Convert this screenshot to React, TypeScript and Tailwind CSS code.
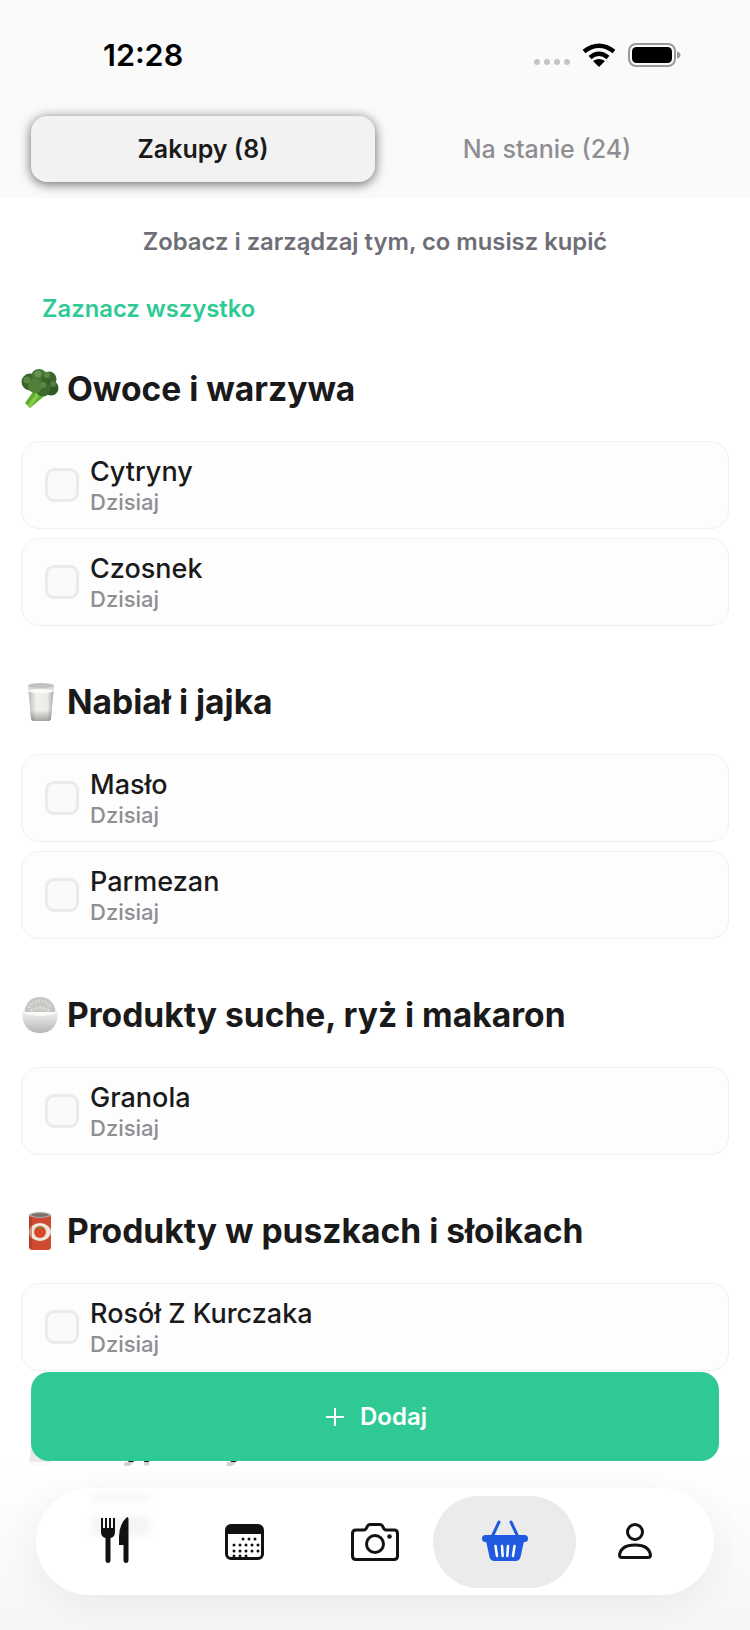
const FONT = "font-['Inter','Noto_Sans',sans-serif]";

function Broccoli() {
  return (
    <svg width="38" height="40" viewBox="0 0 38 40" className="shrink-0">
      <path d="M9 39 L4 34 L14 20 L27 24 Z" fill="#5fae2e" />
      <path d="M9 39 L6.500 36.500 L17 22 L20 24 Z" fill="#84cc44" />
      <circle cx="9" cy="13" r="8.500" fill="#37642a" />
      <circle cx="18" cy="8" r="8" fill="#47753a" />
      <circle cx="28" cy="10" r="7.500" fill="#3a662c" />
      <circle cx="30" cy="19" r="7.500" fill="#305a27" />
      <circle cx="22" cy="20" r="7.500" fill="#3c6b2f" />
      <circle cx="14" cy="17" r="7" fill="#527f39" />
      <circle cx="6" cy="11" r="3.500" fill="#5a8a42" />
      <circle cx="17" cy="5" r="3.500" fill="#68924c" />
      <circle cx="26" cy="6" r="3" fill="#5a8a42" />
      <circle cx="32" cy="15" r="3" fill="#52803c" />
      <circle cx="22" cy="16" r="3" fill="#5a8a42" />
    </svg>
  );
}

function Milk() {
  return (
    <svg width="38" height="40" viewBox="0 0 38 40" className="shrink-0">
      <defs>
        <linearGradient id="milkBody" x1="0" x2="1" y1="0" y2="0">
          <stop offset="0" stopColor="#b9b9b7" />
          <stop offset="0.3" stopColor="#f0f0ee" />
          <stop offset="0.75" stopColor="#ecece9" />
          <stop offset="1" stopColor="#a9a9a6" />
        </linearGradient>
        <linearGradient id="milkBase" x1="0" x2="0" y1="0" y2="1">
          <stop offset="0" stopColor="#000" stopOpacity="0" />
          <stop offset="1" stopColor="#000" stopOpacity="0.32" />
        </linearGradient>
      </defs>
      <path d="M7 3 H33 L30 36 Q30 39 27 39 H13 Q10 39 10 36 Z" fill="#d9d9d7" />
      <path d="M7.500 9 H32.500 L30 36 Q30 39 27 39 H13 Q10 39 10 36 Z" fill="url(#milkBody)" />
      <path d="M9 28 H31 L30 36 Q30 39 27 39 H13 Q10 39 10 36 Z" fill="url(#milkBase)" />
      <ellipse cx="20" cy="3.500" rx="13" ry="2.500" fill="#c2c2c0" />
      <ellipse cx="20" cy="9" rx="12.500" ry="2" fill="#fbfbfa" />
    </svg>
  );
}

function RiceBowl() {
  return (
    <svg width="38" height="38" viewBox="0 0 38 38" className="shrink-0">
      <defs>
        <linearGradient id="bowlBody" x1="0" x2="0" y1="0" y2="1">
          <stop offset="0" stopColor="#f4f4f2" />
          <stop offset="1" stopColor="#b5b5b3" />
        </linearGradient>
      </defs>
      <path d="M3 16 Q6 1 19 1 Q32 1 35 16 Z" fill="#c6c6c3" />
      <path d="M8 12 Q12 5 19 5 Q27 5 30 12" fill="none" stroke="#dcdcd9" strokeWidth="3" strokeDasharray="1.500 1.500" />
      <path d="M10 15 Q19 8 28 15" fill="none" stroke="#e2e2df" strokeWidth="3" strokeDasharray="1.500 1.500" />
      <path d="M1 15 Q19 21 37 15 Q37 37 19 37 Q1 37 1 15 Z" fill="url(#bowlBody)" />
      <path d="M1 15 Q19 21 37 15 L37 17 Q19 23 1 17 Z" fill="#fafafa" />
    </svg>
  );
}

function Can() {
  return (
    <svg width="38" height="40" viewBox="0 0 38 40" className="shrink-0">
      <rect x="8" y="3" width="22" height="36" rx="3" fill="#cf4a33" />
      <ellipse cx="19" cy="21" rx="11" ry="9" fill="#efe6d8" />
      <ellipse cx="19" cy="4" rx="11" ry="3" fill="#a8a8a6" />
      <ellipse cx="19" cy="4" rx="8.500" ry="1.800" fill="#7f6f6b" />
      <circle cx="19" cy="21" r="6" fill="#d9472d" />
      <path d="M16 16.500 Q19 18 22 16.500" fill="none" stroke="#6d8a34" strokeWidth="1.500" />
      <rect x="8" y="6" width="3" height="31" fill="#9f2f20" opacity="0.45" />
    </svg>
  );
}

function Salt() {
  return (
    <svg width="38" height="40" viewBox="0 0 38 40" className="shrink-0">
      <path d="M12 3 H26 L30 37 Q30 39 27 39 H11 Q8 39 8 37 Z" fill="#e9e9e7" />
      <path d="M12 3 H26 L27 10 H11 Z" fill="#b9b9b7" />
    </svg>
  );
}

function Item({ name }: { name: string }) {
  return (
    <div className="flex h-[88px] items-center gap-[11px] rounded-[18px] border border-[#f0f0f0] bg-[#fdfdfd] pl-[23px]">
      <div className="h-[34px] w-[34px] rounded-[9px] border-[3px] border-[#ebebeb] bg-[#fafafa]" />
      <div className="flex flex-col">
        <span className="text-[27px] leading-[33px] font-[550] text-[#1a1a1a]">{name}</span>
        <span className="text-[22px] leading-[28px] font-medium text-[#8e8e93]">Dzisiaj</span>
      </div>
    </div>
  );
}

function Section({ icon, title, items }: { icon: React.ReactNode; title: string; items: string[] }) {
  return (
    <section className="mb-[54px]">
      <div className="mb-[30px] flex h-[44px] items-center gap-[8px]">
        {icon}
        <h2 className="text-[33.6px] leading-[44px] font-bold whitespace-nowrap text-[#1a1a1a]">{title}</h2>
      </div>
      <div className="flex flex-col gap-[9px]">
        {items.map((name) => (
          <Item key={name} name={name} />
        ))}
      </div>
    </section>
  );
}

function ForkKnife() {
  return (
    <svg width="28" height="46" viewBox="0 0 28 46">
      <path d="M0 1 H2 V11 H4 V1 H6 V11 H8 V1 H10 V11 H12 V1 H14 V15 Q14 20 9.500 21 V43 Q9.500 46 7 46 Q4.500 46 4.500 43 V21 Q0 20 0 15 Z" fill="#111" />
      <path d="M26 0 Q27.500 0 27.500 2 V43 Q27.500 46 25 46 Q22.500 46 22.500 43 V28 H18 V20 Q18 7 26 0 Z" fill="#111" />
    </svg>
  );
}

function CalendarIcon() {
  const dots = [
    [18, 15], [24, 15], [30, 15],
    [9, 21], [15, 21], [21, 21], [27, 21], [33, 21],
    [9, 27], [15, 27], [21, 27], [27, 27], [33, 27],
    [9, 32], [15, 32], [21, 32],
  ];
  return (
    <svg width="39" height="36" viewBox="0 0 39 36">
      <rect x="1.500" y="1.500" width="36" height="33" rx="4.500" fill="#fff" stroke="#111" strokeWidth="3" />
      <path d="M1.500 10 V6 Q1.500 1.500 6 1.500 H33 Q37.500 1.500 37.500 6 V10 Z" fill="#111" />
      {dots.map(([x, y]) => (
        <circle key={`${x}-${y}`} cx={x} cy={y} r="1.500" fill="#111" />
      ))}
    </svg>
  );
}

function CameraIcon() {
  return (
    <svg width="48" height="38" viewBox="0 0 48 38" fill="none">
      <path
        d="M5 7 H13 Q14.500 7 15.500 5 L16.500 3 Q17.500 1.500 19 1.500 H29 Q30.500 1.500 31.500 3 L32.500 5 Q33.500 7 35 7 H43 Q46.500 7 46.500 10.500 V33 Q46.500 36.500 43 36.500 H5 Q1.500 36.500 1.500 33 V10.500 Q1.500 7 5 7 Z"
        stroke="#111"
        strokeWidth="3"
      />
      <circle cx="24" cy="21" r="8.500" stroke="#111" strokeWidth="3" />
      <circle cx="38.500" cy="13.500" r="2.300" fill="#111" />
    </svg>
  );
}

function BasketIcon() {
  return (
    <svg width="46" height="42" viewBox="0 0 46 42" fill="none">
      <path d="M10 17 L17 2 M36 17 L29 2" stroke="#1f5ae0" strokeWidth="3" strokeLinecap="round" />
      <rect x="0" y="15" width="46" height="7" rx="3.500" fill="#1f5ae0" />
      <path d="M4 21 H42 L38.500 37 Q37.500 41 33.500 41 H12.500 Q8.500 41 7.500 37 Z" fill="#1f5ae0" />
      <path d="M13.500 26 L15 36 M20 26 L20.700 36 M26 26 L25.300 36 M32.500 26 L31 36" stroke="#fff" strokeWidth="2.500" strokeLinecap="round" />
    </svg>
  );
}

function PersonIcon() {
  return (
    <svg width="34" height="36" viewBox="0 0 34 36" fill="none">
      <ellipse cx="17" cy="9" rx="7.500" ry="7.500" stroke="#111" strokeWidth="3" />
      <path d="M4 34.500 H30 Q32.500 34.500 32.500 32 Q31 22 17 22 Q3 22 1.500 32 Q1.500 34.500 4 34.500 Z" stroke="#111" strokeWidth="3" />
    </svg>
  );
}

function StatusBar() {
  return (
    <div className="flex h-[115px] items-start justify-between pt-[36px] pr-[69px] pl-[103px]">
      <span className="text-[30.5px] leading-[38px] font-semibold text-black">12:28</span>
      <div className="flex items-center pt-[7px]">
        <div className="mt-[14px] mr-[12px] flex gap-[4px]">
          <span className="h-[6px] w-[6px] rounded-full bg-[#c4c4c4]" />
          <span className="h-[6px] w-[6px] rounded-full bg-[#c4c4c4]" />
          <span className="h-[6px] w-[6px] rounded-full bg-[#c4c4c4]" />
          <span className="h-[6px] w-[6px] rounded-full bg-[#c4c4c4]" />
        </div>
        <svg width="34" height="24" viewBox="0 0 34 24" fill="none" className="mr-[12px]">
          <path d="M2 8.500 Q17 -3 32 8.500" stroke="#000" strokeWidth="4.500" />
          <path d="M8 14.500 Q17 7 26 14.500" stroke="#000" strokeWidth="4.500" />
          <path d="M17 24 L11 18 Q17 14 23 18 Z" fill="#000" />
        </svg>
        <svg width="53" height="24" viewBox="0 0 53 24" fill="none">
          <rect x="1" y="1" width="46" height="22" rx="7" stroke="#9a9a9a" strokeWidth="2" />
          <rect x="4" y="4" width="40" height="16" rx="4.500" fill="#000" />
          <path d="M49 8.500 Q52.500 9.500 52.500 12 Q52.500 14.500 49 15.500 Z" fill="#9a9a9a" />
        </svg>
      </div>
    </div>
  );
}

export default function App() {
  return (
    <div className={`relative h-[1630px] w-[750px] overflow-hidden bg-white ${FONT}`}>
      <header className="h-[198px] bg-[#fafafa]">
        <StatusBar />
        <div className="flex px-[31px] pt-[1px]">
          <div className="flex h-[66px] w-[344px] items-center justify-center rounded-[16px] bg-[#f2f2f2] pt-[2px] text-[25px] font-semibold text-[#1a1a1a] shadow-[0_2px_12px_rgba(0,0,0,0.6)]">
            Zakupy (8)
          </div>
          <div className="flex h-[66px] flex-1 items-center justify-center pt-[2px] text-[25px] font-medium text-[#8e8e93]">
            Na stanie (24)
          </div>
        </div>
      </header>

      <main className="px-[21px]">
        <p className="mt-[29px] text-center text-[23.8px] leading-[30px] font-semibold text-[#6e6e76]">
          Zobacz i zarządzaj tym, co musisz kupić
        </p>
        <button className="mt-[37px] mb-[43px] ml-[21px] block text-[23.8px] leading-[30px] font-semibold text-[#2fca93]">
          Zaznacz wszystko
        </button>
        <Section icon={<Broccoli />} title="Owoce i warzywa" items={["Cytryny", "Czosnek"]} />
        <Section icon={<Milk />} title="Nabiał i jajka" items={["Masło", "Parmezan"]} />
        <Section icon={<RiceBowl />} title="Produkty suche, ryż i makaron" items={["Granola"]} />
        <Section icon={<Can />} title="Produkty w puszkach i słoikach" items={["Rosół Z Kurczaka"]} />
        <Section icon={<Salt />} title="Przyprawy" items={["Sól"]} />
      </main>

      {/* fade behind the floating nav */}
      <div className="absolute inset-x-0 top-[1462px] bottom-0 bg-gradient-to-b from-[#ffffffcc] to-[#f6f6f6]" />

      <button className="absolute top-[1372px] left-[31px] flex h-[89px] w-[688px] items-center justify-center gap-[16px] rounded-[18px] bg-[#2fca93] pl-[3px] text-[24px] font-semibold text-white">
        <svg width="18" height="18" viewBox="0 0 18 18" fill="none">
          <path d="M9 0 V18 M0 9 H18" stroke="#fff" strokeWidth="2" />
        </svg>
        Dodaj
      </button>

      <nav className="absolute top-[1488px] left-[36px] flex h-[107px] w-[678px] items-center rounded-[54px] bg-white shadow-[0_10px_40px_rgba(0,0,0,0.06)]">
        {/* ghost of the list showing through the glass */}
        <div className="absolute top-[6px] left-[56px] h-[8px] w-[58px] bg-[#f7f7f7] blur-[3px]" />
        <div className="absolute top-[28px] left-[56px] h-[20px] w-[58px] bg-[#f5f5f5] blur-[3px]" />
        <div className="relative mb-[4px] ml-[65px] flex w-[28px] justify-center">
          <ForkKnife />
        </div>
        <div className="ml-[96px]">
          <CalendarIcon />
        </div>
        <div className="ml-[87px]">
          <CameraIcon />
        </div>
        <div className="ml-[34px] flex h-[92px] w-[143px] items-center justify-center rounded-[46px] bg-[#ebebeb]">
          <div className="mb-[2px]">
            <BasketIcon />
          </div>
        </div>
        <div className="mb-[1px] ml-[42px]">
          <PersonIcon />
        </div>
      </nav>
    </div>
  );
}
